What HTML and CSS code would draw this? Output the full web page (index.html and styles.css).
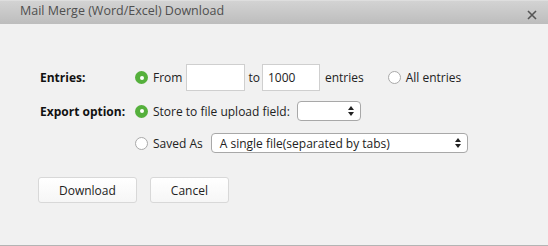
FILE: index.html
```html
<!DOCTYPE html>
<html lang="en">
<head>
  <meta charset="UTF-8" />
  <title>Mail Merge (Word/Excel) Download</title>
  <link rel="stylesheet" href="styles.css">
</head>
<body>

  <div class="dialog">
    <div class="titlebar">
      <span class="title">Mail Merge (Word/Excel) Download</span>
      <svg class="close" width="10" height="10" viewBox="0 0 10 10">
        <path d="M1 1 L9 9 M9 1 L1 9" stroke="#555" stroke-width="1.6" fill="none"/>
      </svg>
    </div>

    <div class="content">
      <div class="row">
        <span class="label">Entries:</span>
        <span class="radio checked"></span>
        <span class="opt">From</span>
        <input class="num num-from" type="text">
        <span class="to">to</span>
        <input class="num num-to" type="text" value="1000">
        <span class="unit">entries</span>
        <span class="radio radio-all"></span>
        <span class="opt">All entries</span>
      </div>

      <div class="row row-export">
        <span class="label">Export option:</span>
        <span class="radio checked"></span>
        <span class="opt">Store to file upload field:</span>
        <span class="select select-field">
          <span class="select-text"></span>
          <svg width="6" height="10" viewBox="0 0 6 10"><path d="M3 0 L6 4 L0 4 Z M0 6 L6 6 L3 10 Z" fill="#222"/></svg>
        </span>
      </div>

      <div class="row row-saved">
        <span class="label"></span>
        <span class="radio"></span>
        <span class="opt">Saved As</span>
        <span class="select select-format">
          <span class="select-text">A single file(separated by tabs)</span>
          <svg width="6" height="10" viewBox="0 0 6 10"><path d="M3 0 L6 4 L0 4 Z M0 6 L6 6 L3 10 Z" fill="#222"/></svg>
        </span>
      </div>

      <div class="actions">
        <button class="btn btn-download">Download</button>
        <button class="btn">Cancel</button>
      </div>
    </div>
  </div>

</body>
</html>
```

FILE: styles.css
```css
body {
  margin: 0;
  font-family: 'Open Sans', 'Noto Sans', sans-serif;
  font-size: 12px;
  color: #222;
  background: #f1f1f1;
}
.dialog {
  width: 548px;
  height: 246px;
  box-sizing: border-box;
  background: #f1f1f1;
  border-bottom: 1px solid #b4b4b4;
}
.titlebar {
  height: 24px;
  box-sizing: border-box;
  display: flex;
  align-items: center;
  justify-content: space-between;
  padding: 0 11px 0 20px;
  background: linear-gradient(#d3d3d3, #bdbdbd);
  border-top: 1px solid #dedede;
}
.title {
  color: #4f4f4f;
  font-size: 12.5px;
  line-height: 16px;
  margin-top: -3px;
}
.close {
  margin-top: 4px;
}
.content {
  padding: 40px 0 0 40px;
}
.row {
  display: flex;
  align-items: center;
  height: 27px;
}
.row-export {
  height: 20px;
  margin-top: 10px;
}
.row-saved {
  height: 20px;
  margin-top: 12px;
}
.label {
  width: 95px;
  font-weight: bold;
  color: #111;
}
.radio {
  width: 13px;
  height: 13px;
  box-sizing: border-box;
  border-radius: 50%;
  border: 1px solid #a9a9a9;
  background: #fff;
  margin-right: 5px;
  position: relative;
}
.radio.checked {
  border: none;
  background: #55b03c;
}
.radio.checked::after {
  content: "";
  position: absolute;
  left: 4.5px;
  top: 4.5px;
  width: 4px;
  height: 4px;
  border-radius: 50%;
  background: #fff;
}
.radio-all {
  margin-left: 24px;
}
.num {
  width: 59px;
  height: 27px;
  box-sizing: border-box;
  border: 1px solid #cfcfcf;
  background: #fff;
  padding: 0 5px;
  font: inherit;
  color: #222;
  outline: none;
}
.num-from {
  margin-left: 4px;
}
.num-to {
  width: 58px;
}
.to {
  margin: 0 2px 0 3px;
}
.unit {
  margin-left: 5px;
}
.select {
  display: flex;
  align-items: center;
  justify-content: space-between;
  height: 20px;
  box-sizing: border-box;
  background: #fff;
  border: 1px solid #a8a8a8;
  border-radius: 4px;
  padding: 0 6px 0 8px;
}
.select-field {
  width: 64px;
  margin-left: 7px;
}
.select-format {
  width: 257px;
  margin-left: 8px;
}
.actions {
  display: flex;
  gap: 13px;
  margin-top: 24px;
  margin-left: -2px;
}
.btn {
  height: 26px;
  padding: 0 20px;
  font: inherit;
  color: #222;
  background: linear-gradient(#fff, #f6f6f6);
  border: 1px solid #d8d8d8;
  border-radius: 3px;
}
```
